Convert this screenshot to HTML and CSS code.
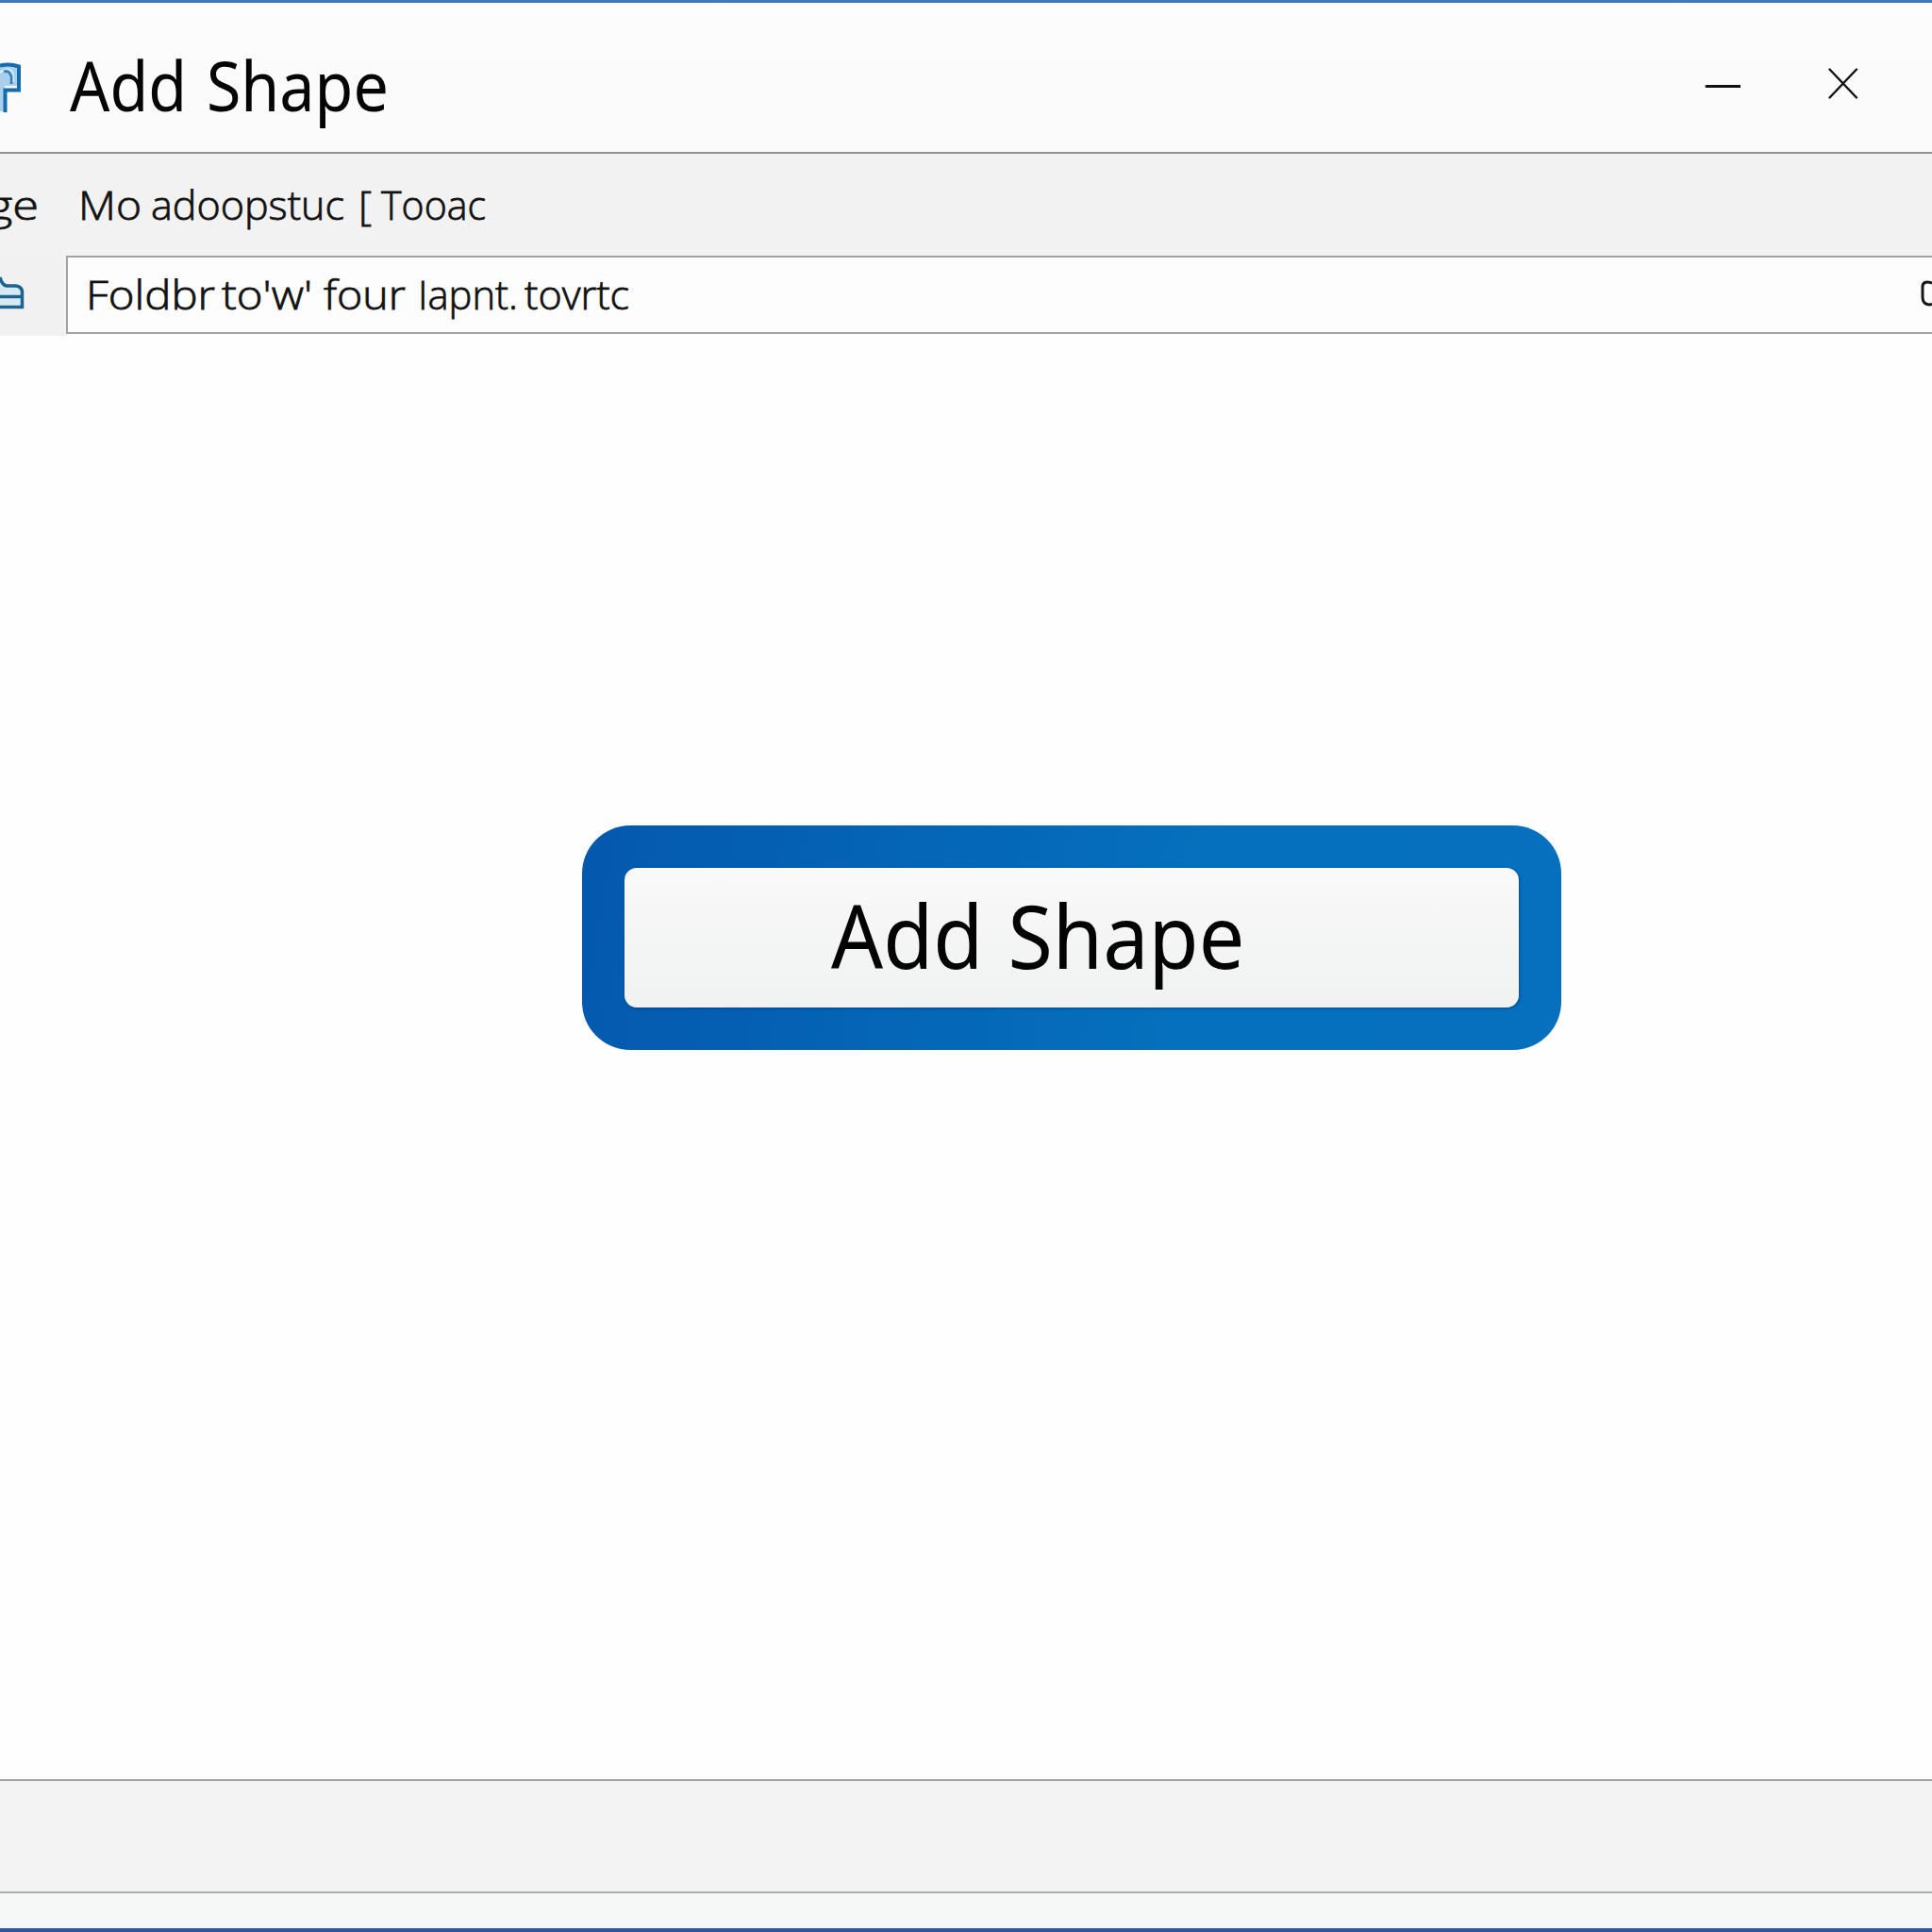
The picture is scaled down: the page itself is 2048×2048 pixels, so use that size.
FILE: index.html
```html
<!DOCTYPE html>
<html lang="en">
<head>
<meta charset="utf-8">
<title>Add Shape</title>
<link rel="stylesheet" href="styles.css">
</head>
<body>
<div class="window">
  <header class="titlebar">
    <svg class="app-icon" width="24" height="60" viewBox="0 0 24 60">
      <path class="app-fill" d="M0 8Q16 5 20 9V29H5V56H0Z"/>
      <path class="app-shade" d="M0 13Q13 6 15 18V25H10V18Q7 10 0 16"/>
      <path class="app-line" d="M0 7.500Q10 5 20 8.500V33.500H5.500V57"/>
      <path class="app-glint" d="M12 27V19Q10 12 4 14"/>
    </svg>
    <h1 class="title"><span class="title-text">Add Shape</span></h1>
    <div class="controls">
      <svg width="38" height="34" viewBox="0 0 38 34"><path class="control-line" d="M2 19.500H38"/></svg>
      <svg width="32" height="34" viewBox="0 0 32 34"><path class="control-line thin" d="M1.500 1.500L30 31.500M30 1.500L1.500 31.500"/></svg>
    </div>
  </header>

  <nav class="menu">
    <svg class="line-text" width="680" height="80" viewBox="0 0 680 80">
      <text x="-13" y="55" textLength="54" lengthAdjust="spacingAndGlyphs">ge</text>
      <text x="83" y="55" textLength="67" lengthAdjust="spacingAndGlyphs">Mo</text>
      <text x="160" y="55" textLength="205" lengthAdjust="spacingAndGlyphs">adoopstuc</text>
      <text x="380" y="55" textLength="14" lengthAdjust="spacingAndGlyphs">[</text>
      <text x="404" y="55" textLength="111" lengthAdjust="spacingAndGlyphs">Tooac</text>
    </svg>
  </nav>

  <div class="location">
    <div class="folder">
      <svg width="28" height="44" viewBox="0 0 28 44">
        <path class="folder-fill" d="M0 9L7 12H17Q24 13 24 19V34H0Z"/>
        <path class="folder-line" d="M0 3Q2 11 7 12H17Q23.500 13 23.500 19V34.500H0M0 23.500H23"/>
      </svg>
    </div>
    <div class="field">
      <svg class="line-text" width="620" height="78" viewBox="0 0 620 78">
        <text x="19" y="55" textLength="137" lengthAdjust="spacingAndGlyphs">Foldbr</text>
        <text x="163" y="55" textLength="96" lengthAdjust="spacingAndGlyphs">to'w'</text>
        <text x="271" y="55" textLength="87" lengthAdjust="spacingAndGlyphs">four</text>
        <text x="371" y="55" textLength="106" lengthAdjust="spacingAndGlyphs">Iapnt.</text>
        <text x="484" y="55" textLength="111" lengthAdjust="spacingAndGlyphs">tovrtc</text>
      </svg>
      <svg class="field-end" width="12" height="78" viewBox="0 0 12 78"><path class="end-line" d="M12 27Q2 24 2 31V42Q2 50 10 50L12 49"/></svg>
    </div>
  </div>

  <main class="canvas">
    <button class="add-button"><span class="add-face"><span class="add-text">Add Shape</span></span></button>
  </main>

  <div class="footer"></div>
  <div class="status"></div>
</div>
</body>
</html>
```
FILE: styles.css
```css
* { box-sizing: border-box; }

body {
  margin: 0;
  font-family: "Noto Sans", "Open Sans", sans-serif;
  color: #050505;
}

.window {
  display: flex;
  flex-direction: column;
  width: 2048px;
  height: 2048px;
  overflow: hidden;
  background: #fefefe;
  border-top: 3px solid #4079b9;
  border-bottom: 4px solid #2b559c;
}

svg { display: block; flex: none; }

.titlebar {
  display: flex;
  align-items: center;
  height: 160px;
  flex: none;
  background: linear-gradient(#fdfdfd, #fafafa);
  border-bottom: 2px solid #929292;
}

.app-icon { margin-top: 19px; }
.app-fill { fill: #a9cfeb; }
.app-shade { fill: #dceefa; }
.app-line { fill: none; stroke: #146cb0; stroke-width: 4; }
.app-glint { fill: none; stroke: #3b83bc; stroke-width: 3; }

.title {
  flex: 1;
  margin: 15px 0 0 50px;
  font-size: 73px;
  line-height: 100px;
  font-weight: 400;
}

.title-text {
  display: inline-block;
  white-space: nowrap;
  word-spacing: 4px;
  transform: scaleX(0.909);
  transform-origin: left;
}

.controls {
  display: flex;
  gap: 93px;
  margin: 14px 78px 0 0;
}

.control-line {
  fill: none;
  stroke: #111;
  stroke-width: 3;
  stroke-linecap: round;
}

.thin { stroke-width: 2.4; }

.menu {
  height: 108px;
  flex: none;
  padding-top: 15px;
  background: #f2f2f2;
}

.line-text {
  font-family: "Open Sans", "Noto Sans", sans-serif;
  font-size: 43px;
  fill: #121212;
  font-weight: 300;
  stroke: #121212;
  stroke-width: 0.8px;
}

.location {
  display: flex;
  flex: none;
  height: 83px;
}

.folder {
  width: 70px;
  height: 85px;
  flex: none;
  padding-top: 20px;
  background: #f1f1f1;
}

.folder-fill { fill: #d7eaf4; }
.folder-line { fill: none; stroke: #1c638e; stroke-width: 3.5; }

.field {
  display: flex;
  flex: 1;
  justify-content: space-between;
  background: #fdfdfd;
  border: 2px solid #a2a2a2;
  border-right: 0;
}

.end-line { fill: none; stroke: #161616; stroke-width: 3; }

.canvas {
  display: flex;
  flex: 1;
  align-items: flex-start;
  padding: 521px 0 0 617px;
}

.add-button {
  display: flex;
  width: 1038px;
  height: 238px;
  padding: 45px;
  border: 0;
  border-radius: 51px;
  background: linear-gradient(100deg, #0458ae, #0570bd 62%, #0670bf);
  font: inherit;
  color: #030303;
}

.add-face {
  display: flex;
  flex: 1;
  height: 148px;
  padding: 8px 0 0 219px;
  border-radius: 13px;
  background: linear-gradient(#f9f9f9, #f0f1f1);
  box-shadow: 1px 1px 3px rgba(0, 35, 90, 0.5);
  font-size: 93px;
  line-height: 126px;
}

.add-text {
  white-space: nowrap;
  word-spacing: 4px;
  transform: scaleX(0.928);
  transform-origin: left;
}

.footer {
  flex: none;
  height: 119px;
  background: #f3f3f3;
  border-top: 2px solid #a0a0a0;
}

.status {
  flex: none;
  height: 39px;
  background: #f6f7f7;
  border-top: 2px solid #adadad;
}
```
